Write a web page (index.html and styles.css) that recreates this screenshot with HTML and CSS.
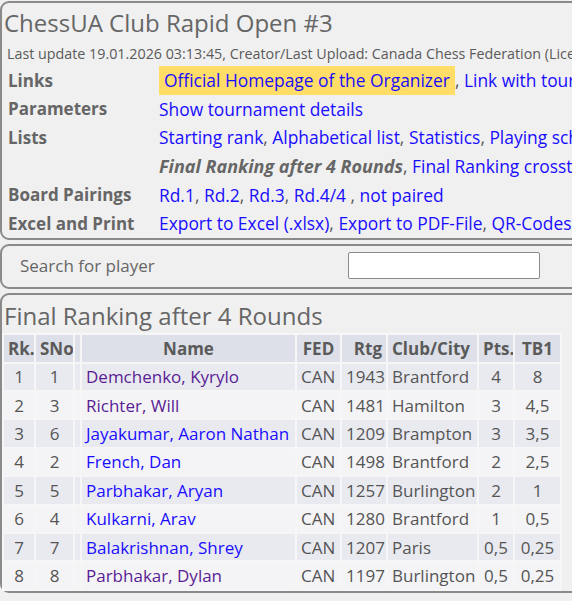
FILE: index.html
```html
<!DOCTYPE html>
<html lang="en">
<head>
<meta charset="utf-8">
<title>ChessUA Club Rapid Open #3</title>
<link rel="stylesheet" href="styles.css">
</head>
<body>
<div class="page">
  <section class="box info">
    <h1 class="title">ChessUA Club Rapid Open #3</h1>
    <div class="update">Last update 19.01.2026 03:13:45, Creator/Last Upload: Canada Chess Federation (Licence 2)</div>
    <div class="grid">
      <div class="label">Links</div>
      <div class="val"><a class="hl" href="#">Official Homepage of the Organizer</a>, <a href="#">Link with tournament calendar</a></div>
      <div class="label">Parameters</div>
      <div class="val"><a href="#">Show tournament details</a></div>
      <div class="label">Lists</div>
      <div class="val"><a href="#">Starting rank</a>, <a href="#">Alphabetical list</a>, <a href="#">Statistics</a>, <a href="#">Playing schedule</a></div>
      <div class="label"></div>
      <div class="val"><span class="current">Final Ranking after 4 Rounds</span>, <a href="#">Final Ranking crosstable after 4 Rounds</a>, <a href="#">Starting rank crosstable</a></div>
      <div class="label">Board Pairings</div>
      <div class="val"><a href="#">Rd.1</a>, <a href="#">Rd.2</a>, <a href="#">Rd.3</a>, <a href="#">Rd.4/4</a> , <a href="#">not paired</a></div>
      <div class="label">Excel and Print</div>
      <div class="val"><a href="#">Export to Excel (.xlsx)</a>, <a href="#">Export to PDF-File</a>, <a href="#">QR-Codes</a></div>
    </div>
  </section>

  <section class="box search">
    <label class="search-label" for="q">Search for player</label>
    <input class="search-input" id="q" type="text">
  </section>

  <section class="box ranking">
    <h2 class="title">Final Ranking after 4 Rounds</h2>
    <table class="rank">
      <thead>
        <tr>
          <th class="c-rk">Rk.</th>
          <th class="c-sno">SNo</th>
          <th class="c-blank"></th>
          <th class="c-name">Name</th>
          <th class="c-fed">FED</th>
          <th class="c-rtg">Rtg</th>
          <th class="c-club">Club/City</th>
          <th class="c-pts">Pts.</th>
          <th class="c-tb">TB1</th>
        </tr>
      </thead>
      <tbody>
        <tr class="odd"><td class="ctr">1</td><td class="ctr">1</td><td></td><td><a class="visited" href="#">Demchenko, Kyrylo</a></td><td>CAN</td><td class="rgt">1943</td><td>Brantford</td><td class="ctr">4</td><td class="ctr">8</td></tr>
        <tr class="even"><td class="ctr">2</td><td class="ctr">3</td><td></td><td><a class="visited" href="#">Richter, Will</a></td><td>CAN</td><td class="rgt">1481</td><td>Hamilton</td><td class="ctr">3</td><td class="ctr">4,5</td></tr>
        <tr class="odd"><td class="ctr">3</td><td class="ctr">6</td><td></td><td><a href="#">Jayakumar, Aaron Nathan</a></td><td>CAN</td><td class="rgt">1209</td><td>Brampton</td><td class="ctr">3</td><td class="ctr">3,5</td></tr>
        <tr class="even"><td class="ctr">4</td><td class="ctr">2</td><td></td><td><a href="#">French, Dan</a></td><td>CAN</td><td class="rgt">1498</td><td>Brantford</td><td class="ctr">2</td><td class="ctr">2,5</td></tr>
        <tr class="odd"><td class="ctr">5</td><td class="ctr">5</td><td></td><td><a href="#">Parbhakar, Aryan</a></td><td>CAN</td><td class="rgt">1257</td><td>Burlington</td><td class="ctr">2</td><td class="ctr">1</td></tr>
        <tr class="even"><td class="ctr">6</td><td class="ctr">4</td><td></td><td><a href="#">Kulkarni, Arav</a></td><td>CAN</td><td class="rgt">1280</td><td>Brantford</td><td class="ctr">1</td><td class="ctr">0,5</td></tr>
        <tr class="odd"><td class="ctr">7</td><td class="ctr">7</td><td></td><td><a href="#">Balakrishnan, Shrey</a></td><td>CAN</td><td class="rgt">1207</td><td>Paris</td><td class="ctr">0,5</td><td class="ctr">0,25</td></tr>
        <tr class="even"><td class="ctr">8</td><td class="ctr">8</td><td></td><td><a class="visited" href="#">Parbhakar, Dylan</a></td><td>CAN</td><td class="rgt">1197</td><td>Burlington</td><td class="ctr">0,5</td><td class="ctr">0,25</td></tr>
      </tbody>
    </table>
  </section>
</div>
</body>
</html>
```

FILE: styles.css
```css
html, body {
  margin: 0;
  padding: 0;
  overflow: hidden;
  background: #f0f0f0;
}

body {
  font-family: "Open Sans", "Noto Sans", "Liberation Sans", sans-serif;
  font-size: 17px;
  color: #555;
}

.page {
  width: 900px;
  padding-top: 1px;
}

a {
  color: #1a0dff;
  text-decoration: none;
}

a.visited {
  color: #5a1d94;
}

.box {
  border: 2px solid #8a8a8a;
  border-radius: 9px;
  background: #f0f0f0;
  margin-bottom: 4px;
}

.title {
  margin: 0;
  font-size: 24px;
  font-weight: normal;
  color: #666;
  white-space: nowrap;
  padding-left: 2px;
}

.info .title {
  padding-top: 4px;
  line-height: 32px;
}

.update {
  margin-top: 5px;
  line-height: 20px;
  font-size: 14.3px;
  color: #5a5a5a;
  padding-left: 5px;
  white-space: nowrap;
}

.grid {
  margin-top: 2px;
  display: grid;
  grid-template-columns: 151px 1fr;
  grid-auto-rows: 28.6px;
  padding-left: 6px;
}

.label {
  font-weight: bold;
  color: #666;
  display: flex;
  align-items: center;
  white-space: nowrap;
}

.val {
  display: flex;
  align-items: center;
  white-space: pre;
  font-size: 17.4px;
}

.val a, .val span {
  white-space: nowrap;
}

.val a.hl {
  background: #ffdd66;
  align-self: stretch;
  display: flex;
  align-items: center;
  padding: 0 5px;
}

.current {
  font-weight: bold;
  font-style: italic;
  font-size: 18px;
  color: #666;
}

.search {
  display: flex;
  align-items: center;
  padding: 6px 0 8px 18px;
}

.search-label {
  width: 328px;
  color: #666;
  font-size: 17px;
}

.search-input {
  box-sizing: border-box;
  width: 192px;
  height: 27px;
  border: 1px solid #8a8a8a;
  border-radius: 2px;
  background: #fff;
  margin: 0;
}

.ranking .title {
  margin-top: 4px;
  line-height: 34px;
}

.rank {
  table-layout: fixed;
  width: 560px;
  border-collapse: separate;
  border-spacing: 2px;
  background: #f6f6f6;
}

.rank th, .rank td {
  box-sizing: border-box;
  padding: 0 4px;
  white-space: nowrap;
  overflow: hidden;
}

.rank th {
  height: 27px;
  background: #dde0e8;
  color: #5a5a5a;
  font-weight: bold;
  text-align: center;
}

.rank td {
  height: 26.4px;
  text-align: left;
}

.rank tr.odd td { background: #e9eaf0; }
.rank tr.even td { background: #f4f4f6; }

.rank td.ctr { text-align: center; }
.rank td.rgt { text-align: right; }

.c-rk { width: 30px; }
.c-sno { width: 37px; }
.c-blank { width: 5px; padding: 0 !important; }
.c-name { width: 213px; }
.c-fed { width: 43px; }
.rank th.c-rtg { width: 44px; text-align: right; }
.rank th.c-club { width: 89px; text-align: left; }
.c-pts { width: 34px; }
.c-tb { width: 45px; padding: 0 2px !important; }
```
